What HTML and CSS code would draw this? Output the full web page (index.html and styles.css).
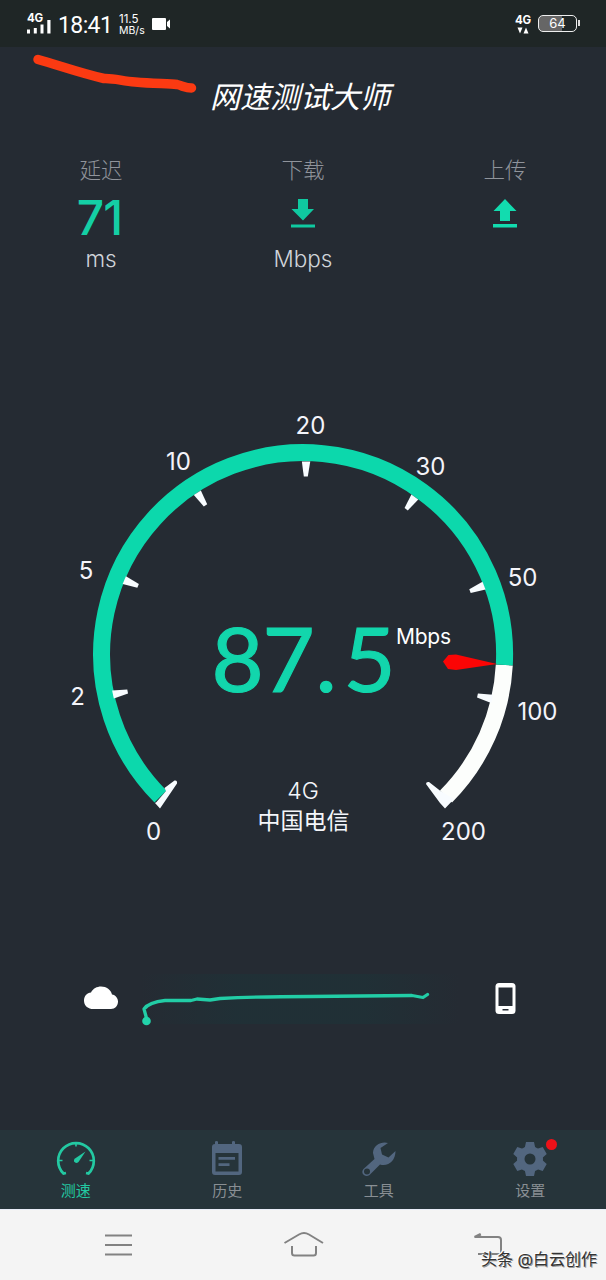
FILE: index.html
```html
<!DOCTYPE html>
<html lang="zh-CN">
<head>
<meta charset="utf-8">
<title>网速测试大师</title>
<link rel="stylesheet" href="styles.css">
</head>
<body>
<div class="phone">
  <header class="status">
    <div class="signal">
      <span class="net">4G</span>
      <svg width="24" height="14" viewBox="0 0 24 14" fill="#fff"><rect x="0" y="9.500" width="3" height="4"/><rect x="6.800" y="8" width="3" height="5.500"/><rect x="13.500" y="4.500" width="3" height="9"/><rect x="20.300" y="0" width="3.200" height="13.500"/></svg>
    </div>
    <span class="clock">18:41</span>
    <div class="rate"><span>11.5</span><span>MB/s</span></div>
    <svg class="cam" width="19" height="14" viewBox="0 0 19 14" fill="#fff"><rect x="0" y="1" width="14" height="12" rx="1"/><path d="M15 5l3-2.500v9l-3-2.500z"/></svg>
    <div class="data"><span class="net">4G</span><svg width="12" height="7" viewBox="0 0 12 7" fill="#fff"><path d="M.5.500h5L3 6.500zM6.500 6.500h5L9 .500z"/></svg></div>
    <div class="battery"><span>64</span></div>
  </header>

  <h1 class="title">网速测试大师</h1>
  <svg class="scribble" width="606" height="110" viewBox="0 0 606 110"><path d="M38 59.500C58 65 80 73 104 78.500C114 78 122 81 135 82C155 84 169 83 177 84.500C183 86 186 88 191.500 88" fill="none" stroke="#fb3a12" stroke-width="9.500" stroke-linecap="round" stroke-linejoin="round"/></svg>

  <section class="stats">
    <div class="stat"><span class="label">延迟</span><span class="value">71</span><span class="unit">ms</span></div>
    <div class="stat"><span class="label">下载</span><span class="value"><svg width="24" height="30" viewBox="0 0 24 30" fill="#0fc9a0"><path d="M7 0h10v10h6L12 21.500.500 10H7zM0 25.500h24v3H0z"/></svg></span><span class="unit">Mbps</span></div>
    <div class="stat"><span class="label">上传</span><span class="value"><svg width="24" height="30" viewBox="0 0 24 30" fill="#12dcaf"><path d="M12 0l11.500 12H17v10H7V12H.500zM0 25h24v3.500H0z"/></svg></span></div>
  </section>

  <section class="gauge">
    <svg width="606" height="480" viewBox="0 390 606 480">
      <path d="M504.300 665A201.500 201.500 0 0 1 446 796.500" fill="none" stroke="#fcfefc" stroke-width="17"/>
      <path d="M160.500 796.500A201.500 201.500 0 1 1 504.300 665" fill="none" stroke="#0cd8ac" stroke-width="17"/>
      <g fill="#f8fcff">
        <path d="M155 803L160 808.500L177 783.500Q177.500 780 174.500 780.500L164.500 788L166 791L156.500 802Z"/>
        <path d="M426 784Q426 781.500 429 782L440.500 791L454 799L445 808.500L440 803Z"/>
        <g transform="translate(303 655.500)">
          <path id="tick" d="M-4.200-194h8.400L2-179h-4z" transform="rotate(.9)"/>
          <use href="#tick" transform="rotate(-33.900)"/>
          <use href="#tick" transform="rotate(-68)"/>
          <use href="#tick" transform="rotate(-102.500)"/>
          <use href="#tick" transform="rotate(34.300)"/>
          <use href="#tick" transform="rotate(68)"/>
          <use href="#tick" transform="rotate(102)"/>
        </g>
      </g>
      <path d="M497 664L456 654.500L448.500 655L443 661.500L448 669L456 670Z" fill="#fb0505"/>
      <g class="marks">
        <text x="153.500" y="840">0</text><text x="77.500" y="705">2</text><text x="86" y="579">5</text>
        <text x="178.500" y="469.500">10</text><text x="310.500" y="434">20</text><text x="430.500" y="474.500">30</text>
        <text x="522.500" y="585.500">50</text><text x="537.500" y="719.500">100</text><text x="463.500" y="840">200</text>
      </g>
      <text class="reading" y="692"><tspan x="211.500">8</tspan><tspan x="262.500">7</tspan><tspan x="315.500">.</tspan><tspan x="343.500">5</tspan></text>
      <text class="reading-unit" x="396" y="644" textLength="55">Mbps</text>
      <text class="network" x="303" y="799">4G</text>
      <text class="network carrier" x="303.500" y="829">中国电信</text>
    </svg>
  </section>

  <section class="trace">
    <svg width="606" height="100" viewBox="0 950 606 100">
      <defs><linearGradient id="haze"><stop offset="0" stop-color="#1d3338" stop-opacity="0"/><stop offset=".3" stop-color="#1d3338" stop-opacity=".6"/><stop offset=".7" stop-color="#1d3338" stop-opacity=".6"/><stop offset="1" stop-color="#1d3338" stop-opacity="0"/></linearGradient></defs>
      <rect x="140" y="974" width="320" height="50" fill="url(#haze)"/>
      <path d="M91.500 1009C86.500 1008 84 1004.500 84 1000.500C84 996 87 993 91 992.500C93 988.500 97 986.500 101 986.500C106.500 986.500 111 990 112 994.500C115.500 995 118 998 118 1001.500C118 1006 115 1009 111 1009Z" fill="#fff"/>
      <path d="M147 1020L144 1009C148 1003.500 155 1001.500 165 1000.500H191L197 999L210 1000L220 998.500C250 997 280 996.500 310 996.500L412 995.500L423 997.500L427.500 994.500" fill="none" stroke="#22cda6" stroke-width="3.300" stroke-linecap="round" stroke-linejoin="round"/>
      <circle cx="146.500" cy="1021" r="4.300" fill="#22d3aa"/>
      <rect x="495.500" y="983" width="20" height="31" rx="3.500" fill="#fff"/><path d="M498.500 987.500h14v18.500h-14zM502.500 1009h6v1.500h-6z" fill="#252b33"/>
    </svg>
  </section>

  <nav class="tabs">
    <a class="tab active">
      <svg width="40" height="40" viewBox="0 0 40 40" fill="none" stroke="#23c9a2" stroke-width="2.700"><path d="M10 33L7.500 33.500A17.800 17.800 0 1 1 32.500 33.500L30 33"/><path d="M20 3v3.500M3 20.500h3.500M33.500 20.500h3.500" stroke-width="1.600"/><path d="M29.500 11.500L22.500 22Q20 24 18 21.500Q17.500 19.500 19 18.500Z" fill="#23c9a2" stroke="none"/></svg>
      <span>测速</span></a>
    <a class="tab">
      <svg width="40" height="40" viewBox="0 0 40 40" fill="#52667f"><path fill-rule="evenodd" d="M8 4V2q0-1 1.500-1T11 2v2h14V2q0-1 1.500-1T28 2v2h4q3 0 3 3v25q0 3-3 3H8q-3 0-3-3V7q0-3 3-3zM8.500 13v18.500h23V13zM11.500 17H28v2.700H11.500zM11.500 23.300h11v2.700h-11z"/></svg>
      <span>历史</span></a>
    <a class="tab">
      <svg width="40" height="40" viewBox="0 0 40 40" fill="#52667f"><path fill-rule="evenodd" d="M29 3C23 1 14 5 14 13L15.500 19L4.500 29C1 33 6 38 10.500 35L21 24.500C29 27 36.500 21 36.500 11L29.500 17.500L23 14.500L21.500 8ZM8 28.500a3 3 0 1 1 0 6a3 3 0 0 1 0-6z"/></svg>
      <span>工具</span></a>
    <a class="tab">
      <svg width="40" height="40" viewBox="0 0 40 40"><g fill="#52667f" transform="translate(20 19)"><circle r="13"/><path id="tooth" d="M-4-17h8l1.500 7h-11zM-4 17h8l1.500-7h-11z"/><use href="#tooth" transform="rotate(60)"/><use href="#tooth" transform="rotate(120)"/><circle r="5.500" fill="#26343a"/></g></svg>
      <i class="dot"></i><span>设置</span></a>
  </nav>

  <footer class="keys">
    <svg width="606" height="71" viewBox="0 1209 606 71" fill="none" stroke="#828282" stroke-width="2"><path d="M105 1235.500h27M105 1245h27M105 1254.500h27"/><path d="M284.500 1243L299 1234.500Q304 1231.500 309 1234.500L323 1243M292 1246v7q0 2.500 2.500 2.500h19q2.500 0 2.500-2.500v-7"/><path d="M481 1234.500L474.500 1237H498q3 0 3 3v14H478M474.500 1237l6-3"/></svg>
    <span class="credit">头条 @白云创作</span>
  </footer>
</div>
</body>
</html>
```
FILE: styles.css
```css
* { box-sizing: border-box; }
body { margin: 0; background: #252b33; font-family: Inter, "Noto Sans CJK SC", sans-serif; }
svg { display: block; }
.phone { position: relative; width: 606px; height: 1280px; display: flex; flex-direction: column; background: #252b33; color: #fff; overflow: hidden; }

.status { height: 47px; flex: none; display: flex; align-items: flex-start; padding: 13px 29px 0 27px; background: #1f2626; }
.signal { width: 24px; }
.signal svg { margin-top: -4px; }
.net { display: block; font-size: 11.5px; line-height: 11px; font-weight: 700; letter-spacing: -.2px; }
.clock { font: 400 23px/26px Roboto, sans-serif; margin-left: 7px; width: 54px; white-space: nowrap; letter-spacing: -.6px; }
.rate { display: flex; flex-direction: column; margin: 1px 0 0 7px; width: 33px; font-size: 11.5px; line-height: 11px; white-space: nowrap; }
.rate span:last-child { font-size: 10.5px; }
.cam { margin-top: 4px; }
.data { margin: 2px 6px 0 auto; width: 17px; }
.data svg { margin: 1px 0 0 2px; }
.battery { position: relative; width: 39px; height: 17px; margin-top: 2px; border: 1.5px solid #eee; border-radius: 5px; padding: 1px; background: linear-gradient(90deg, #666 62%, #1f2626 62%); font-size: 13px; line-height: 13px; text-align: center; }
.battery::after { content: ""; position: absolute; right: -4px; top: 4px; width: 2px; height: 6px; background: #ddd; }

.title { flex: none; height: 97px; margin: 0; padding: 26px 0 0 210px; font: italic 400 30px/44px "Noto Sans CJK SC", sans-serif; white-space: nowrap; }
.scribble { position: absolute; left: 0; top: 0; }

.stats { flex: none; height: 140px; display: grid; grid-template-columns: 202px 202px 202px; padding-top: 11px; }
.stat { display: flex; flex-direction: column; align-items: center; }
.label { height: 30px; font-size: 21.5px; line-height: 30px; font-weight: 300; color: #90949b; }
.value { height: 60px; font-size: 48px; line-height: 66px; font-weight: 500; color: #14cfa5; letter-spacing: -1px; margin-left: -3px; }
.value svg { margin: 14px 0 0 3px; }
.unit { font-size: 22.5px; line-height: 28px; color: #d0d4da; font-weight: 300; }

.gauge { flex: none; height: 480px; margin-top: 106px; }
.marks { font-size: 24px; font-weight: 400; fill: #f4f4fa; text-anchor: middle; }
.reading { font: 400 90px Lato, sans-serif; fill: #12d6ac; stroke: #12d6ac; stroke-width: 1.2px; }
.reading-unit { font-size: 21px; fill: #fff; }
.network { font-size: 23px; font-weight: 300; fill: #f4f6fa; text-anchor: middle; }
.carrier { font-weight: 400; }

.trace { flex: none; height: 100px; margin-top: 80px; }

.tabs { flex: none; height: 79px; margin-top: 80px; display: grid; grid-template-columns: repeat(4, 151.5px); background: #26343a; }
.tab { position: relative; display: flex; flex-direction: column; align-items: center; padding-top: 10px; color: #898f94; }
.tab span { font-size: 15px; line-height: 20px; margin-top: 1px; }
.tab.active { color: #23c9a2; }
.dot { position: absolute; left: 91px; top: 9px; width: 11px; height: 11px; border-radius: 50%; background: #ee1119; }

.keys { position: relative; flex: none; height: 71px; background: #f4f4f4; border-top: 1px solid #e9edf8; }
.keys svg { margin-top: -1px; }
.credit { position: absolute; left: 481px; top: 38px; font: 400 16px/22px Inter, "Noto Sans CJK SC", sans-serif; color: #333; white-space: nowrap; text-shadow: -1px -1px 0 #fff, 1px 1px 0 #999; }
```
